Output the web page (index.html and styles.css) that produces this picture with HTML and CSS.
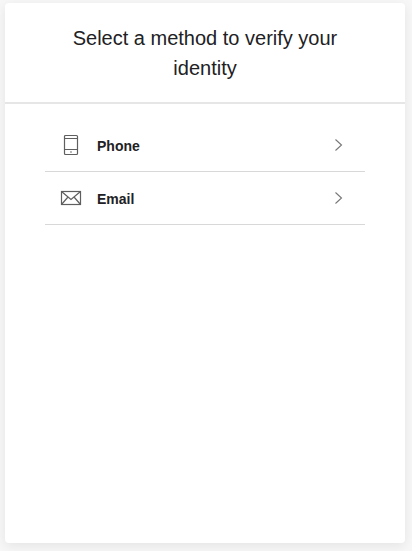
FILE: index.html
```html
<!DOCTYPE html>
<html lang="en">
<head>
    <meta charset="UTF-8">
    <meta name="viewport" content="width=device-width, initial-scale=1.0">
    <title>Verify your identity</title>
    <link rel="stylesheet" href="styles.css">
</head>
<body>
    <div class="card">
        <div class="heading">Select a method to verify your identity</div>

        <div class="methods">
            <div class="method">
                <div class="method-icon">
                    <svg width="16" height="22" viewBox="0 0 16 22" fill="none" stroke="#5f5f5f" stroke-width="1.2">
                        <rect x="1.5" y="1.5" width="13" height="19" rx="1"/>
                        <path d="M1.5 4.5h13M1.5 15.5h13"/>
                        <circle cx="8" cy="18" r="0.8" fill="#5f5f5f" stroke="none"/>
                    </svg>
                </div>
                <div class="method-name">Phone</div>
                <svg class="chevron" width="9" height="14" viewBox="0 0 9 14" fill="none" stroke="#777" stroke-width="1.1">
                    <path d="M1.5 1.5L7.5 7L1.5 12.5"/>
                </svg>
            </div>

            <div class="method">
                <div class="method-icon">
                    <svg width="22" height="16" viewBox="0 0 22 16" fill="none" stroke="#5f5f5f" stroke-width="1.2">
                        <rect x="1.5" y="1.5" width="19" height="13"/>
                        <path d="M1.5 1.5L11 9.5L20.5 1.5M1.5 14.5L8 7M20.5 14.5L14 7"/>
                    </svg>
                </div>
                <div class="method-name">Email</div>
                <svg class="chevron" width="9" height="14" viewBox="0 0 9 14" fill="none" stroke="#777" stroke-width="1.1">
                    <path d="M1.5 1.5L7.5 7L1.5 12.5"/>
                </svg>
            </div>
        </div>
    </div>
</body>
</html>
```

FILE: styles.css
```css
html, body{
    height: 100%;
}
body{
    margin: 0;
    padding: 3px 7px 8px 5px;
    box-sizing: border-box;
    background-color: rgb(247,247,247);
    font-family: "Liberation Sans", Arial, sans-serif;
    color: rgb(33,33,36);
}
.card{
    height: 100%;
    background-color: white;
    border-radius: 4px;
    box-shadow: 0 3px 12px rgba(0,0,0,0.08);
}
.heading{
    height: 101px;
    padding: 20px 50px 0 50px;
    box-sizing: border-box;
    border-bottom: 2px solid rgb(230,230,230);
    font-size: 20px;
    line-height: 30px;
    text-align: center;
}
.methods{
    margin: 15px 40px 0 40px;
}
.method{
    display: flex;
    align-items: center;
    height: 52px;
    border-bottom: 1px solid rgb(216,216,216);
}
.method-icon{
    display: flex;
    justify-content: center;
    width: 52px;
}
.method-name{
    flex: 1;
    padding-top: 2px;
    font-size: 14px;
    font-weight: bold;
}
.chevron{
    margin-right: 22px;
}
```
